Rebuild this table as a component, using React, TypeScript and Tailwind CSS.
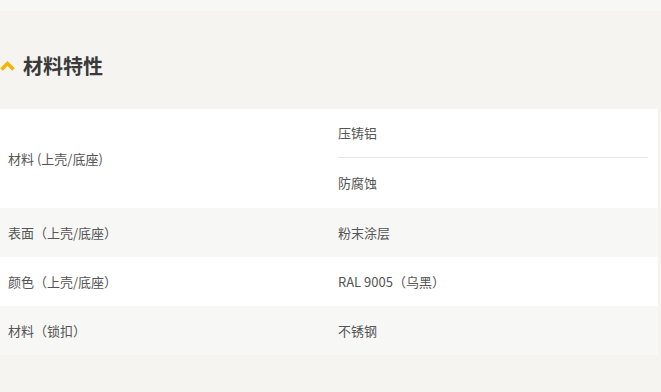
export default function App() {
  const font = { fontFamily: '"Noto Sans CJK SC", "Noto Sans", sans-serif' };
  const rows = [
    { label: "表面（上壳/底座）", value: "粉末涂层", bg: "bg-[#f7f7f5]" },
    { label: "颜色（上壳/底座）", value: "RAL 9005（乌黑）", bg: "bg-white" },
    { label: "材料（锁扣）", value: "不锈钢", bg: "bg-[#f7f7f5]" },
  ];
  return (
    <div className="w-[661px] h-[392px] bg-[#f5f4f0] overflow-hidden" style={font}>
      <div className="h-[11px] bg-[#f7f7f6]" />
      <div className="h-[98px] pt-[11px] flex items-center gap-[8px]">
        <svg width="15" height="10" viewBox="0 0 15 10" className="mt-[1px]">
          <path d="M1.5 8.5 L7.5 2.5 L13.5 8.5" fill="none" stroke="#f5b400" strokeWidth="3.5" />
        </svg>
        <span className="text-[20px] font-bold text-[#3a3a3a] leading-none">材料特性</span>
      </div>
      <div className="w-[658px] text-[13px] text-[#555]">
        <div className="flex bg-white h-[99px]">
          <div className="w-[330px] pl-[8px] flex items-center">材料 (上壳/底座)</div>
          <div className="flex-1 pl-[8px] pr-[10px] flex flex-col">
            <div className="h-[49px] flex items-center border-b border-[#e6e6e6]">压铸铝</div>
            <div className="h-[50px] flex items-center">防腐蚀</div>
          </div>
        </div>
        {rows.map((r) => (
          <div key={r.label} className={`flex h-[49px] ${r.bg}`}>
            <div className="w-[330px] pl-[8px] flex items-center">{r.label}</div>
            <div className="flex-1 pl-[8px] flex items-center">{r.value}</div>
          </div>
        ))}
      </div>
    </div>
  );
}
